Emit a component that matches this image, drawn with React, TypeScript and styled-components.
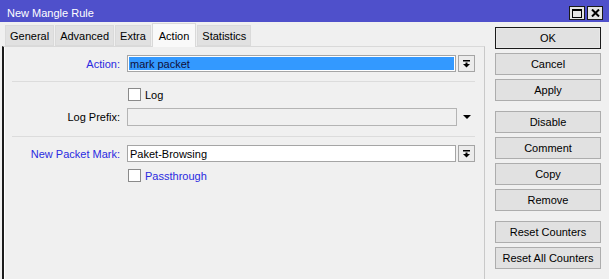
import React from 'react';
import styled, { createGlobalStyle } from 'styled-components';

const Global = createGlobalStyle`
  html, body { margin: 0; padding: 0; background: #f0f0f0; }
  body { font-family: "Liberation Sans", Arial, sans-serif; font-size: 11px; color: #000; }
  #root { width: 609px; height: 279px; overflow: hidden; }
`;

const Window = styled.div`
  width: 609px;
  height: 279px;
  display: flex;
  flex-direction: column;
  background: #f0f0f0;
  overflow: hidden;
`;

const TitleBar = styled.div`
  height: 22px;
  flex: none;
  background: #4f50cb;
  display: flex;
  align-items: flex-start;
  padding: 0 6px 0 7px;
  color: #fff;
`;

const Title = styled.span`
  flex: 1;
  font-size: 11px;
  line-height: 13px;
  padding-top: 7px;
`;

const TitleButtons = styled.div`
  display: flex;
  gap: 2px;
  margin-top: 6px;
`;

const TitleButton = styled.div`
  width: 14px;
  height: 12px;
  border: 1px solid #1a1a1a;
  background: #e4e4e4;
  display: flex;
  align-items: center;
  justify-content: center;
`;

const Body = styled.div`
  flex: 1;
  display: flex;
  min-height: 0;
`;

const Main = styled.div`
  width: 485px;
  flex: none;
  display: flex;
  flex-direction: column;
`;

const TabBar = styled.div`
  height: 24px;
  flex: none;
  display: flex;
  align-items: flex-end;
  gap: 1px;
  padding-left: 5px;
  position: relative;
  z-index: 1;
`;

const Tab = styled.div<{ $active?: boolean }>`
  height: ${p => (p.$active ? '24px' : '21px')};
  margin-bottom: ${p => (p.$active ? '-1px' : '0')};
  padding: 0 ${p => (p.$active ? '6px' : '4px')};
  box-sizing: border-box;
  display: flex;
  align-items: center;
  background: ${p => (p.$active ? '#f9f9f9' : '#e1e1e1')};
  border: 1px solid ${p => (p.$active ? '#d9d9d9' : '#dadada')};
  border-bottom: ${p => (p.$active ? 'none' : '1px solid #dadada')};
  font-size: 11px;
  color: #000;
`;

const Panel = styled.div`
  flex: 1;
  margin-left: 2px;
  border-left: 2px solid #1c1c1c;
  border-top: 1px solid #d9d9d9;
  border-right: 1px solid #c9c9c9;
  box-shadow: inset 1px 0 #ffffff;
  display: flex;
  flex-direction: column;
`;

const Row = styled.div<{ $top: number; $h: number }>`
  display: flex;
  align-items: center;
  gap: 7px;
  margin-top: ${p => p.$top}px;
  height: ${p => p.$h}px;
  flex: none;
`;

const Label = styled.div<{ $blue?: boolean }>`
  width: 116px;
  flex: none;
  text-align: right;
  color: ${p => (p.$blue ? '#2a2ae0' : '#000')};
  font-size: 11px;
`;

const Field = styled.div<{ $gap?: number }>`
  width: 348px;
  height: 100%;
  display: flex;
  gap: ${p => p.$gap ?? 0}px;
`;

const Input = styled.div<{ $bg: string; $selected?: boolean; $disabled?: boolean }>`
  flex: 1;
  box-sizing: border-box;
  height: 100%;
  border: 1px solid ${p => (p.$disabled ? '#b4b4b4' : '#a5a5a5')};
  background: ${p => p.$bg};
  box-shadow: ${p => (p.$selected ? 'inset 0 0 0 1px #ffffff' : 'none')};
  padding-left: 2px;
  display: flex;
  align-items: center;
  font-size: 11px;
  color: ${p => (p.$selected ? '#10103a' : '#000')};
  white-space: nowrap;
`;

const DropButton = styled.div`
  width: 17px;
  flex: none;
  box-sizing: border-box;
  height: 100%;
  border: 1px solid #a5a5a5;
  background: #ececec;
  display: flex;
  align-items: center;
  justify-content: center;
`;

const ArrowSlot = styled.div`
  width: 17px;
  flex: none;
  display: flex;
  align-items: center;
  justify-content: center;
  padding-left: 1px;
`;

const Separator = styled.div<{ $top: number }>`
  margin-top: ${p => p.$top}px;
  margin-left: 8px;
  width: 463px;
  height: 1px;
  background: #dcdcdc;
  flex: none;
`;

const CheckLine = styled.label<{ $blue?: boolean }>`
  display: flex;
  align-items: center;
  gap: 4px;
  margin-left: 1px;
  color: ${p => (p.$blue ? '#2a2ae0' : '#000')};
  font-size: 11px;
`;

const Box = styled.span`
  width: 13px;
  height: 13px;
  box-sizing: border-box;
  border: 1px solid #8a8a8a;
  background: #ffffff;
  display: inline-block;
`;

const Side = styled.div`
  flex: 1;
  display: flex;
  flex-direction: column;
  gap: 10px;
  padding: 5px 0 0 10px;
`;

const ButtonGroup = styled.div`
  display: flex;
  flex-direction: column;
  gap: 4px;
`;

const SideButton = styled.div<{ $default?: boolean }>`
  width: 106px;
  height: 22px;
  box-sizing: border-box;
  border: 1px solid ${p => (p.$default ? '#1a1a1a' : '#adadad')};
  box-shadow: ${p => (p.$default ? 'inset 0 0 0 1px #e8e8e8' : 'none')};
  background: #e1e1e1;
  display: flex;
  align-items: center;
  justify-content: center;
  font-size: 11px;
  color: #000;
`;

const ComboIcon = () => (
  <svg width="7" height="8" viewBox="0 0 7 8">
    <rect x="0" y="0" width="7" height="1.5" fill="#000" />
    <rect x="2.5" y="2.5" width="2" height="2" fill="#000" />
    <polygon points="0,4 7,4 3.5,7.5" fill="#000" />
  </svg>
);

const DownTriangle = () => (
  <svg width="8" height="4" viewBox="0 0 8 4">
    <polygon points="0,0 8,0 4,4" fill="#000" />
  </svg>
);

const MaxIcon = () => (
  <svg width="10" height="9" viewBox="0 0 10 9">
    <rect x="0.5" y="0.5" width="9" height="8" fill="none" stroke="#000" />
    <rect x="0" y="0" width="10" height="2" fill="#000" />
  </svg>
);

const CloseIcon = () => (
  <svg width="9" height="8" viewBox="0 0 9 8">
    <path d="M1 0.5 L8 7.5 M8 0.5 L1 7.5" stroke="#000" strokeWidth="2" />
  </svg>
);

const tabs = ['General', 'Advanced', 'Extra', 'Action', 'Statistics'];

export default function App() {
  return (
    <>
      <Global />
      <Window>
        <TitleBar>
          <Title>New Mangle Rule</Title>
          <TitleButtons>
            <TitleButton><MaxIcon /></TitleButton>
            <TitleButton><CloseIcon /></TitleButton>
          </TitleButtons>
        </TitleBar>
        <Body>
          <Main>
            <TabBar>
              {tabs.map(t => (
                <Tab key={t} $active={t === 'Action'}>{t}</Tab>
              ))}
            </TabBar>
            <Panel>
              <Row $top={8} $h={17}>
                <Label $blue>Action:</Label>
                <Field $gap={2}>
                  <Input $bg="#3399ff" $selected>mark packet</Input>
                  <DropButton><ComboIcon /></DropButton>
                </Field>
              </Row>
              <Separator $top={9} />
              <Row $top={6} $h={13}>
                <Label />
                <CheckLine><Box />Log</CheckLine>
              </Row>
              <Row $top={7} $h={18}>
                <Label>Log Prefix:</Label>
                <Field>
                  <Input $bg="#f0f0f0" $disabled />
                  <ArrowSlot><DownTriangle /></ArrowSlot>
                </Field>
              </Row>
              <Separator $top={10} />
              <Row $top={8} $h={17}>
                <Label $blue>New Packet Mark:</Label>
                <Field $gap={2}>
                  <Input $bg="#ffffff">Paket-Browsing</Input>
                  <DropButton><ComboIcon /></DropButton>
                </Field>
              </Row>
              <Row $top={7} $h={13}>
                <Label />
                <CheckLine $blue><Box />Passthrough</CheckLine>
              </Row>
            </Panel>
          </Main>
          <Side>
            <ButtonGroup>
              <SideButton $default>OK</SideButton>
              <SideButton>Cancel</SideButton>
              <SideButton>Apply</SideButton>
            </ButtonGroup>
            <ButtonGroup>
              <SideButton>Disable</SideButton>
              <SideButton>Comment</SideButton>
              <SideButton>Copy</SideButton>
              <SideButton>Remove</SideButton>
            </ButtonGroup>
            <ButtonGroup>
              <SideButton>Reset Counters</SideButton>
              <SideButton>Reset All Counters</SideButton>
            </ButtonGroup>
          </Side>
        </Body>
      </Window>
    </>
  );
}
